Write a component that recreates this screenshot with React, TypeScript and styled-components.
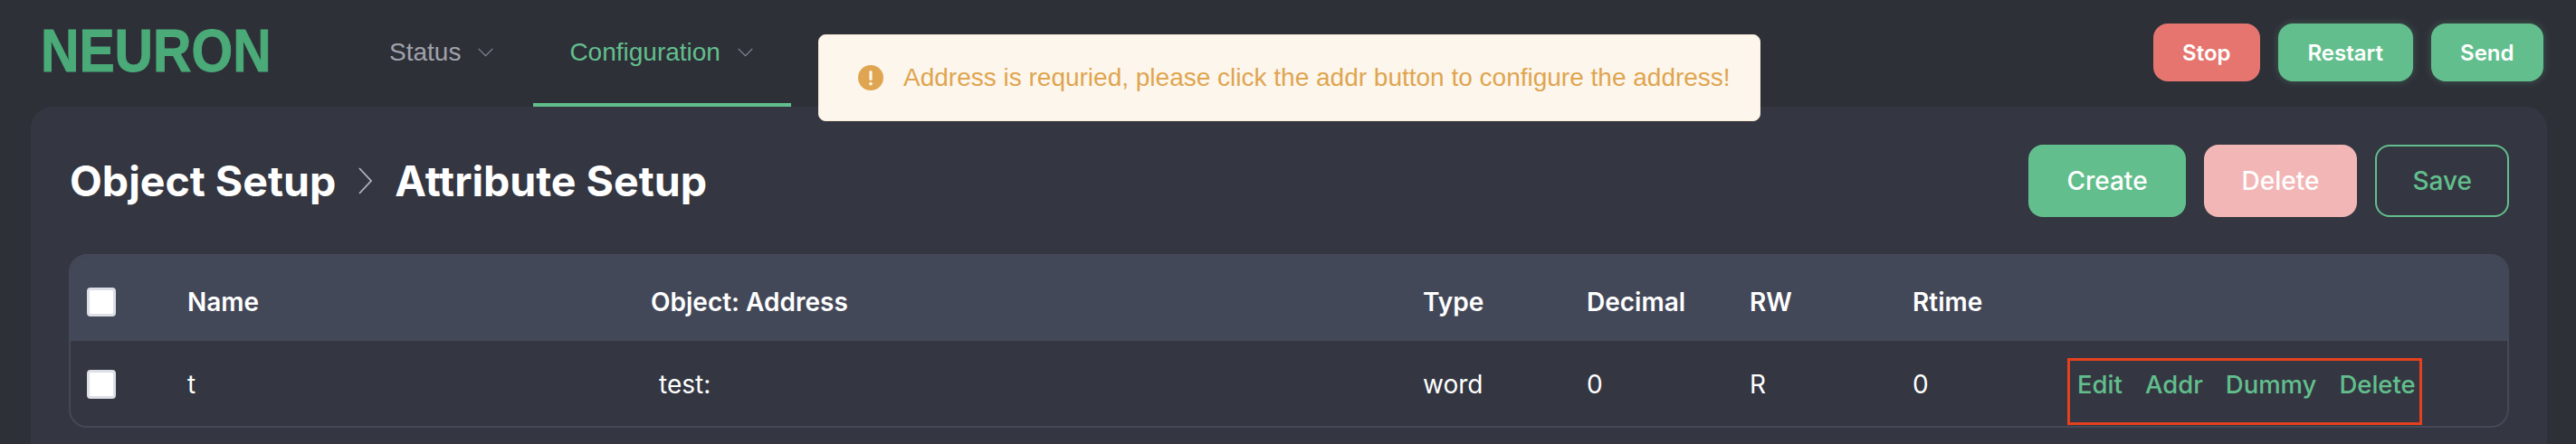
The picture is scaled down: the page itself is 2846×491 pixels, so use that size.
import styled, { createGlobalStyle } from 'styled-components';

const GlobalStyle = createGlobalStyle`
	html, body {
		margin: 0;
		height: 491px;
		overflow: hidden;
		background: #2e3038;
		font-family: Inter, 'Liberation Sans', sans-serif;
	}
`;

const Page = styled.div`
	width: 2846px;
	height: 491px;
	position: relative;
	overflow: hidden;
`;

const Header = styled.header`
	height: 118px;
	display: flex;
	align-items: stretch;
	padding: 0 36px 0 45px;
	box-sizing: border-box;
`;

const LogoBox = styled.div`
	width: 343px;
	display: flex;
	align-items: center;
	padding-bottom: 7px;
	box-sizing: border-box;
`;

const Logo = styled.span`
	font-family: 'Liberation Sans', sans-serif;
	font-weight: 700;
	font-size: 66px;
	line-height: 1;
	color: #4aab78;
	display: inline-block;
	transform: scaleX(0.89);
	transform-origin: left center;
	-webkit-text-stroke: 1px #4aab78;
`;

const Nav = styled.nav`
	display: flex;
	align-items: stretch;
`;

const NavItem = styled.div<{ $active?: boolean }>`
	display: flex;
	align-items: center;
	gap: 19px;
	padding: ${({ $active }) => ($active ? '2px 42px 0 40px' : '2px 44px 0 42px')};
	font-family: 'Liberation Sans', sans-serif;
	font-size: 28px;
	color: ${({ $active }) => ($active ? '#62bf8d' : '#a0a2ab')};
	border-bottom: 4px solid ${({ $active }) => ($active ? '#62bf8d' : 'transparent')};
	box-sizing: border-box;
	svg {
		margin-top: -2px;
	}
`;

const Actions = styled.div`
	margin-left: auto;
	padding-top: 26px;
	display: flex;
	gap: 20px;
	align-items: flex-start;
`;

const SmallButton = styled.button<{ $tone: 'red' | 'green' }>`
	height: 64px;
	padding: 0 32.5px;
	border: 0;
	border-radius: 16px;
	font-family: Inter, sans-serif;
	font-size: 24px;
	font-weight: 600;
	color: #fff;
	background: ${({ $tone }) => ($tone === 'red' ? '#e6756f' : '#62bf8d')};
	box-shadow: ${({ $tone }) => ($tone === 'green' ? '0 0 8px rgba(98, 191, 141, 0.3)' : 'none')};
`;

const Panel = styled.main`
	margin: 0 32px 0 34px;
	height: 373px;
	padding: 42px 42px 0;
	box-sizing: border-box;
	background: #343741;
	border-radius: 24px 24px 0 0;
`;

const PanelHead = styled.div`
	display: flex;
	align-items: center;
	justify-content: space-between;
	height: 80px;
	margin-bottom: 41px;
`;

const Crumbs = styled.div`
	display: flex;
	align-items: center;
	gap: 25px;
	padding-left: 1px;
	font-size: 46.5px;
	font-weight: 700;
	color: #fff;
`;

const ButtonRow = styled.div`
	display: flex;
	gap: 20px;
`;

const PanelButton = styled.button<{ $kind: 'primary' | 'faded' | 'outline' }>`
	height: 80px;
	padding: 0 ${({ $kind }) => ($kind === 'outline' ? '39px' : '42px')};
	border-radius: 16px;
	font-family: Inter, sans-serif;
	font-size: 28px;
	font-weight: 500;
	box-sizing: border-box;
	color: ${({ $kind }) => ($kind === 'outline' ? '#62bf8d' : '#fff')};
	background: ${({ $kind }) =>
		$kind === 'primary' ? '#62bf8d' : $kind === 'faded' ? '#f2b6b6' : 'transparent'};
	border: ${({ $kind }) => ($kind === 'outline' ? '2px solid #62bf8d' : '0')};
`;

const Table = styled.div`
	border: 2px solid #454858;
	border-radius: 20px;
	overflow: hidden;
	height: 192px;
	box-sizing: border-box;
`;

const Row = styled.div<{ $head?: boolean }>`
	display: grid;
	grid-template-columns: 129px 512px 853px 181px 180px 180px 182px 1fr;
	align-items: center;
	height: 94px;
	box-sizing: border-box;
	padding-top: ${({ $head }) => ($head ? '10px' : '1px')};
	background: ${({ $head }) => ($head ? '#434858' : 'transparent')};
	border-bottom: ${({ $head }) => ($head ? '2px solid #454858' : '0')};
	font-size: 28px;
	font-weight: ${({ $head }) => ($head ? 600 : 400)};
	color: #fff;
`;

const CheckCell = styled.div`
	padding-left: 18px;
	display: flex;
`;

const Checkbox = styled.span`
	width: 32px;
	height: 32px;
	box-sizing: border-box;
	background: #fff;
	border: 3px solid #dcdfe6;
	border-radius: 4px;
`;

const IndentedValue = styled.div`
	padding-left: 9px;
`;

const OpCell = styled.div`
	position: relative;
	display: flex;
	gap: 25px;
	font-size: 27.5px;
	font-weight: 500;
	color: #62bf8d;
`;

const Highlight = styled.div`
	position: absolute;
	left: -11px;
	top: -12px;
	width: 392px;
	height: 74px;
	box-sizing: border-box;
	border: 3px solid #e5401f;
	pointer-events: none;
`;

const Toast = styled.div`
	position: absolute;
	left: 904px;
	top: 38px;
	width: 1041px;
	height: 96px;
	box-sizing: border-box;
	padding-left: 43px;
	display: flex;
	align-items: center;
	gap: 22px;
	background: #fdf6ec;
	border: 1px solid #faecd8;
	border-radius: 8px;
	font-family: 'Liberation Sans', sans-serif;
	font-size: 28px;
	color: #dfa550;
`;

const ChevronDown = ({ color }: { color: string }) => (
	<svg width="17" height="17" viewBox="0 0 24 24" fill="none" stroke={color} strokeWidth="1.5">
		<path d="M1 7l11 11L23 7" />
	</svg>
);

const CrumbArrow = () => (
	<svg width="15" height="30" viewBox="0 0 15 30" fill="none" stroke="#b4b6bd" strokeWidth="1.8">
		<path d="M1 1l13 14L1 29" />
	</svg>
);

const WarnIcon = () => (
	<svg width="28" height="28" viewBox="0 0 28 28">
		<circle cx="14" cy="14" r="14" fill="#dfa550" />
		<rect x="12.4" y="6" width="3.2" height="11" rx="1.6" fill="#fdf6ec" />
		<circle cx="14" cy="20.6" r="1.9" fill="#fdf6ec" />
	</svg>
);

export default function App() {
	return (
		<Page>
			<GlobalStyle />
			<Header>
				<LogoBox>
					<Logo>NEURON</Logo>
				</LogoBox>
				<Nav>
					<NavItem>
						Status
						<ChevronDown color="#8b8d96" />
					</NavItem>
					<NavItem $active>
						Configuration
						<ChevronDown color="#8b8d96" />
					</NavItem>
				</Nav>
				<Actions>
					<SmallButton $tone="red">Stop</SmallButton>
					<SmallButton $tone="green">Restart</SmallButton>
					<SmallButton $tone="green">Send</SmallButton>
				</Actions>
			</Header>
			<Panel>
				<PanelHead>
					<Crumbs>
						<span>Object Setup</span>
						<CrumbArrow />
						<span>Attribute Setup</span>
					</Crumbs>
					<ButtonRow>
						<PanelButton $kind="primary">Create</PanelButton>
						<PanelButton $kind="faded">Delete</PanelButton>
						<PanelButton $kind="outline">Save</PanelButton>
					</ButtonRow>
				</PanelHead>
				<Table>
					<Row $head>
						<CheckCell>
							<Checkbox />
						</CheckCell>
						<div>Name</div>
						<div>Object: Address</div>
						<div>Type</div>
						<div>Decimal</div>
						<div>RW</div>
						<div>Rtime</div>
						<div />
					</Row>
					<Row>
						<CheckCell>
							<Checkbox />
						</CheckCell>
						<div>t</div>
						<IndentedValue>test:</IndentedValue>
						<div>word</div>
						<div>0</div>
						<div>R</div>
						<div>0</div>
						<OpCell>
							<span>Edit</span>
							<span>Addr</span>
							<span>Dummy</span>
							<span>Delete</span>
							<Highlight />
						</OpCell>
					</Row>
				</Table>
			</Panel>
			<Toast>
				<WarnIcon />
				Address is requried, please click the addr button to configure the address!
			</Toast>
		</Page>
	);
}
